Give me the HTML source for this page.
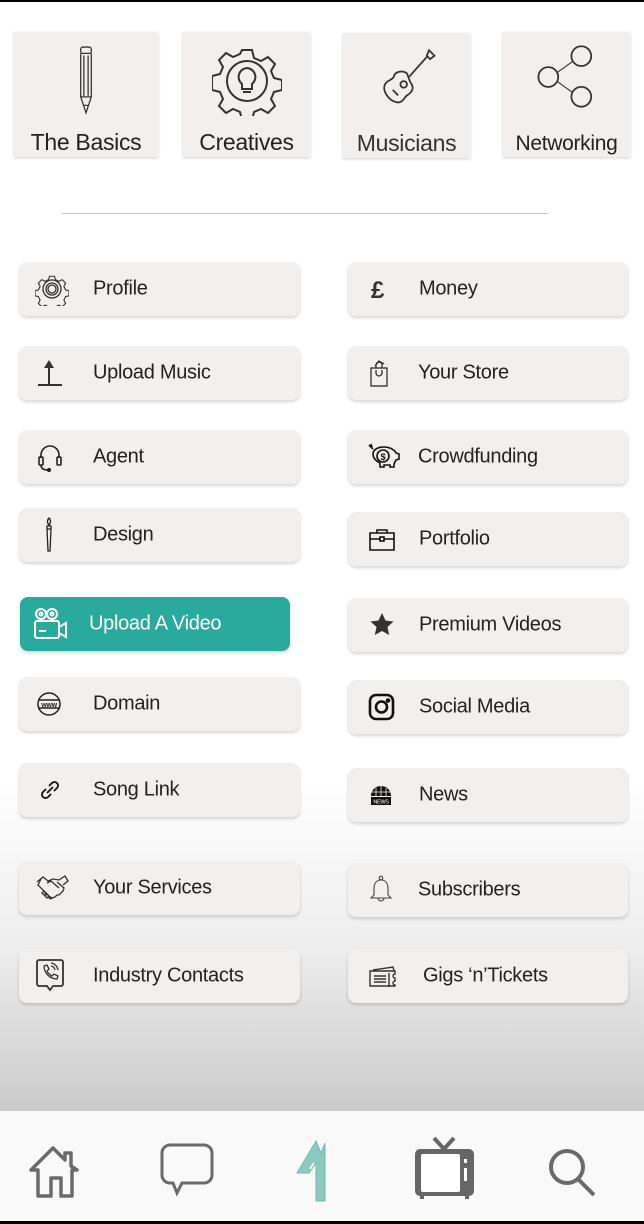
<!DOCTYPE html>
<html><head><meta charset="utf-8">
<style>
*{margin:0;padding:0;box-sizing:border-box}
body{width:644px;height:1224px;position:relative;overflow:hidden;font-family:"Liberation Sans",sans-serif;color:#222;
background:linear-gradient(#fff 0,#fff 780px,#ededed 950px,#cbcbcb 1110px)}
.topb{position:absolute;left:0;top:0;width:644px;height:2px;background:#000}
.tile{position:absolute;background:#f1f0ef;box-shadow:0 1px 3px rgba(0,0,0,.18);text-align:center}
.tile span{position:absolute;left:0;right:0;bottom:1px;font-size:23px;color:#222;letter-spacing:-.3px}
.tile svg{position:absolute;left:50%;transform:translateX(-50%)}
.hr{position:absolute;left:62px;top:213px;width:486px;height:1px;background:#c4c4c4}
.b{position:absolute;height:54px;background:#f1f0ef;border-radius:8px;box-shadow:0 2px 3px rgba(0,0,0,.16);font-size:20px;letter-spacing:-.3px}
.b span{position:absolute;top:50%;transform:translateY(-50%);white-space:nowrap}
.b svg{position:absolute;top:50%;transform:translateY(-50%)}
.L{left:19px;width:281px}.L span{left:74px}.L svg{left:16px}
.R{left:348px;width:280px}.R span{left:71px}.R svg{left:19px}
.nav{position:absolute;left:0;top:1111px;width:644px;height:110px;background:#f9f9f9}
.botb{position:absolute;left:0;top:1221px;width:644px;height:3px;background:#000}
</style></head><body>
<div class="topb"></div>

<div class="tile" style="left:14px;top:32px;width:144px;height:125px">
<svg style="top:14px" width="24" height="70" viewBox="0 0 20 66" fill="none" stroke="#333" stroke-width="1.2"><rect x="5" y="1" width="10" height="6" rx="2"/><path d="M5 7v41l5 15 5-15V7M8 9v38M12 9v38M5 48h10M8 56h4"/></svg>
<span>The Basics</span></div>
<div class="tile" style="left:183px;top:32px;width:127px;height:125px">
<svg style="top:14px" width="70" height="70" viewBox="0 0 70 70" fill="none" stroke="#333" stroke-width="2"><path d="M30 4h10l2 8 7 3 7-4 7 7-4 7 3 7 8 2v10l-8 2-3 7 4 7-7 7-7-4-7 3-2 8H30l-2-8-7-3-7 4-7-7 4-7-3-7-8-2V30l8-2 3-7-4-7 7-7 7 4 7-3z"/><circle cx="35" cy="35" r="20"/><path d="M35 22a9 9 0 0 0-5 16v5h10v-5a9 9 0 0 0-5-16zM31 46h8"/></svg>
<span>Creatives</span></div>
<div class="tile" style="left:343px;top:33px;width:127px;height:125px">
<svg style="top:14px" width="66" height="66" viewBox="0 0 60 60" fill="none" stroke="#333" stroke-width="1.6"><path d="M50 3l5 5-4 3-3-3zM48 9L32 27"/><path d="M30 24c-4-3-11-2-12 3-1 3-6 3-8 7-3 6 4 15 10 16 6 2 7-4 10-6 5-3 7-7 3-12z"/><circle cx="27" cy="34" r="3"/><path d="M17 39l5 5"/></svg>
<span style="color:#333">Musicians</span></div>
<div class="tile" style="left:503px;top:32px;width:127px;height:125px">
<svg style="top:12px" width="66" height="66" viewBox="0 0 60 60" fill="none" stroke="#333" stroke-width="1.6"><circle cx="43" cy="11" r="9"/><circle cx="13" cy="30" r="9"/><circle cx="43" cy="48" r="9"/><path d="M21 26l14-10M21 34l14 10" stroke-width="1"/></svg>
<span style="font-size:21px">Networking</span></div>

<div class="hr"></div>

<div class="b L" style="top:262px"><svg width="34" height="34" viewBox="0 0 34 34" fill="none" stroke="#333" stroke-width="1.3"><path d="M14 2h6l1 4 4 2 4-2 4 4-2 4 2 4 4 1v6l-4 1-2 4 2 4-4 4-4-2-4 2-1 4h-6l-1-4-4-2-4 2-4-4 2-4-2-4-4-1v-6l4-1 2-4-2-4 4-4 4 2 4-2z" transform="scale(.85) translate(3 3)"/><circle cx="17" cy="17" r="9"/><circle cx="17" cy="17" r="6"/><circle cx="17" cy="17" r="4"/></svg><span>Profile</span></div>
<div class="b L" style="top:346px"><svg width="30" height="30" viewBox="0 0 30 30"><path d="M14 2l-5 8h4v16h2V10h4z" fill="#333"/><rect x="3" y="26" width="24" height="2" fill="#333"/></svg><span>Upload Music</span></div>
<div class="b L" style="top:430px"><svg width="30" height="30" viewBox="0 0 30 30" fill="none" stroke="#222" stroke-width="1.6"><path d="M6 16v-3a9 9 0 0 1 18 0v3"/><rect x="4" y="15" width="4" height="8" rx="1"/><rect x="22" y="15" width="4" height="8" rx="1"/><path d="M6 23c0 4 3 5 7 5"/><circle cx="14" cy="28" r="1.3" fill="#222"/></svg><span>Agent</span></div>
<div class="b L" style="top:508px"><svg width="30" height="36" viewBox="0 0 30 36" fill="none" stroke="#222" stroke-width="1.3"><path d="M14 1c-2 2-2 5 0 7 2-2 2-5 0-7zM12 9h4v3h-4zM12 12l1 22h2l1-22"/></svg><span>Design</span></div>
<div class="b" style="top:597px;left:20px;width:270px;background:#2aa99d;color:#fff"><svg style="left:13px" width="36" height="34" viewBox="0 0 36 34" fill="none" stroke="#fff" stroke-width="2"><circle cx="8" cy="7" r="5"/><circle cx="19" cy="7" r="5"/><circle cx="8" cy="7" r="1.5"/><circle cx="19" cy="7" r="1.5"/><rect x="2" y="14" width="24" height="17" rx="2"/><path d="M26 20l7-4v14l-7-4M6 24h7"/></svg><span style="left:69px">Upload A Video</span></div>
<div class="b L" style="top:677px"><svg width="30" height="30" viewBox="0 0 30 30" fill="none" stroke="#222" stroke-width="1.5"><circle cx="14" cy="15" r="11"/><path d="M3 11h22M3 19h22" /><text x="14" y="18" font-size="7" font-family="Liberation Sans" font-weight="bold" text-anchor="middle" fill="#222" stroke="none">www</text></svg><span>Domain</span></div>
<div class="b L" style="top:763px"><svg width="30" height="30" viewBox="0 0 30 30" fill="none" stroke="#111" stroke-width="1.8"><path d="M14 11l3-3a3 3 0 0 1 5 5l-3 3M16 19l-3 3a3 3 0 0 1-5-5l3-3M12 18l6-6"/></svg><span>Song Link</span></div>
<div class="b L" style="top:861px"><svg width="34" height="30" viewBox="0 0 34 30" fill="none" stroke="#333" stroke-width="1.3"><path d="M2 9l6-5 5 4 5-2 6 1 6-4 3 5-5 4M6 6l-3 6 6 6 5 5 3 2 3-1 2-2 2 0 2-2 2-2 1-3-7-6M12 10l4-2 8 7"/><path d="M9 18l-2 2 2 2 2-2zM12 21l-2 2 2 2 2-2zM15 23l-1 2 2 1 1-2"/></svg><span>Your Services</span></div>
<div class="b L" style="top:949px"><svg width="32" height="36" viewBox="0 0 32 36" fill="none" stroke="#333" stroke-width="1.8"><path d="M4 2h22a2 2 0 0 1 2 2v22a2 2 0 0 1-2 2h-8l-3 4-3-4H4a2 2 0 0 1-2-2V4a2 2 0 0 1 2-2z"/><path d="M9 8l3-1 2 4-2 2c1 2 3 4 5 5l2-2 4 2-1 3c-7 0-13-6-13-13zM16 8a5 5 0 0 1 4 4M16 5a8 8 0 0 1 7 7" stroke-width="1.3"/></svg><span>Industry Contacts</span></div>

<div class="b R" style="top:262px"><svg width="26" height="30" viewBox="0 0 26 30"><text x="4" y="24" font-size="24" font-family="Liberation Sans" font-weight="bold" fill="#333">£</text></svg><span>Money</span></div>
<div class="b R" style="top:346px"><svg width="26" height="30" viewBox="0 0 26 30" fill="none" stroke="#222" stroke-width="1.2"><path d="M4 10h16v18H4zM9 10V7a3 3 0 0 1 6 0v3M9 12v3a3 3 0 0 0 6 0v-3M8 8l4-5 5 3"/></svg><span style="left:70px">Your Store</span></div>
<div class="b R" style="top:430px"><svg width="34" height="30" viewBox="0 0 34 30" fill="none" stroke="#111" stroke-width="1.6"><path d="M6 12c0-5 6-7 11-7s10 2 12 6l3 1v5l-3 1-2 4v3h-4v-2h-6v2h-4v-4c-4-2-7-5-7-9z"/><circle cx="16" cy="14" r="6"/><text x="16" y="18" font-size="9" font-weight="bold" text-anchor="middle" fill="#111" stroke="none" font-family="Liberation Sans">$</text><path d="M2 3l4 4M4 2l1 3"/></svg><span style="left:70px">Crowdfunding</span></div>
<div class="b R" style="top:512px"><svg width="30" height="30" viewBox="0 0 30 30" fill="none" stroke="#111" stroke-width="1.6"><path d="M10 9V6h10v3M3 9h24v17H3zM3 15h24"/><rect x="13" y="13" width="4" height="4" fill="#fff"/></svg><span>Portfolio</span></div>
<div class="b R" style="top:598px"><svg width="30" height="30" viewBox="0 0 30 30"><path d="M15 3l3.5 7.5 8 1-6 5.5 1.7 8L15 21l-7.2 4 1.7-8-6-5.5 8-1z" fill="#333"/></svg><span>Premium Videos</span></div>
<div class="b R" style="top:680px"><svg width="30" height="30" viewBox="0 0 30 30" fill="none" stroke="#111" stroke-width="2.6"><rect x="3" y="3" width="23" height="24" rx="6"/><circle cx="14.5" cy="15" r="5.5"/><circle cx="21" cy="8.5" r="1" fill="#111"/></svg><span>Social Media</span></div>
<div class="b R" style="top:768px"><svg width="28" height="30" viewBox="0 0 28 30"><path d="M4 16a10 10 0 0 1 20 0z" fill="#111"/><path d="M14 6v10M9 8v8M19 8v8M4 12h20" stroke="#f1f0ef" stroke-width=".8"/><rect x="4" y="17" width="20" height="8" fill="#111"/><text x="14" y="23.5" font-size="5.5" fill="#fff" text-anchor="middle" font-family="Liberation Sans">NEWS</text></svg><span>News</span></div>
<div class="b R" style="top:863px"><svg width="28" height="32" viewBox="0 0 28 32" fill="none" stroke="#444" stroke-width="1.1"><circle cx="14" cy="4" r="1.8"/><path d="M14 6c-5 0-7 4-7 9v6l-3 3h20l-3-3v-6c0-5-2-9-7-9zM11 24a3 3 0 0 0 6 0"/></svg><span style="left:70px">Subscribers</span></div>
<div class="b R" style="top:949px"><svg width="34" height="30" viewBox="0 0 34 30" fill="none" stroke="#333" stroke-width="1.4"><path d="M6 9l20-3 1 4M3 10h25v3a2 2 0 0 0 0 4v3a2 2 0 0 0 0 4v1H3z"/><path d="M7 15h12M7 18h12M7 21h12M22 12v14"/></svg><span style="left:75px">Gigs ‘n’Tickets</span></div>

<div class="nav">
<svg style="position:absolute;left:28px;top:30px" width="60" height="60" viewBox="0 0 60 60" fill="none" stroke="#6a6a6a" stroke-width="3.5" stroke-linejoin="round"><path d="M3 29L25 7l12 12V12h6v13l6 4h-5v26H33V37H23v18H10V29z"/></svg>
<svg style="position:absolute;left:160px;top:32px" width="56" height="58" viewBox="0 0 56 58" fill="none" stroke="#6a6a6a" stroke-width="3"><path d="M10 2h34a8 8 0 0 1 8 8v22a8 8 0 0 1-8 8H22l-5 10-4-10h-3a8 8 0 0 1-8-8V10a8 8 0 0 1 8-8z"/></svg>
<svg style="position:absolute;left:295px;top:28px" width="36" height="64" viewBox="0 0 36 64" fill="#8cc9bf" stroke="#6fbcb0" stroke-width="1"><path d="M21 2L2 34h12l7-10V62h9V4l-4 10z"/><path d="M15 30l4-6" stroke="#f9f9f9" stroke-width="2"/></svg>
<svg style="position:absolute;left:412px;top:24px" width="64" height="66" viewBox="0 0 64 66"><path d="M22 3l10 11 10-11" fill="none" stroke="#666" stroke-width="4"/><rect x="3" y="14" width="59" height="47" rx="5" fill="#666"/><rect x="9" y="19" width="39" height="38" rx="2" fill="#fff"/><rect x="52" y="24" width="3" height="4" fill="#fff"/><rect x="52" y="33" width="3" height="13" fill="#fff"/><rect x="8" y="60" width="4" height="4" fill="#666"/><rect x="53" y="60" width="4" height="4" fill="#666"/></svg>
<svg style="position:absolute;left:545px;top:38px" width="56" height="50" viewBox="0 0 56 50" fill="none" stroke="#6a6a6a" stroke-width="4"><circle cx="22" cy="18" r="16"/><path d="M33 30l16 16"/></svg>
</div>
<div class="botb"></div>
</body></html>
